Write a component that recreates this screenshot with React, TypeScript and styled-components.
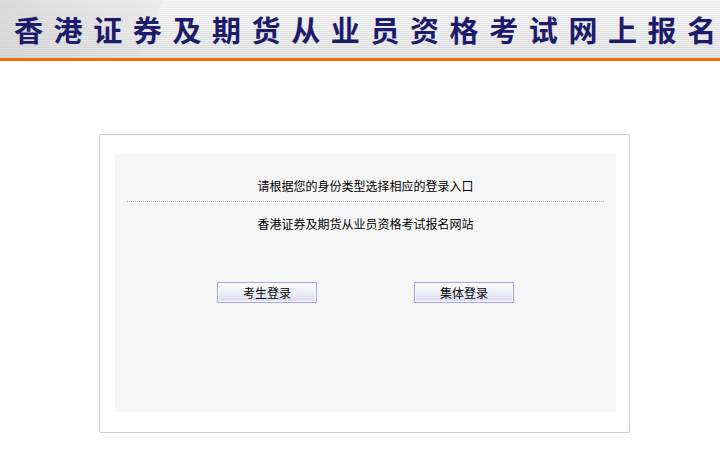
import React from "react"
import styled, { createGlobalStyle } from "styled-components"

const GlobalStyle = createGlobalStyle`
  body {
    margin: 0;
    background: #ffffff;
    font-family: "Noto Sans CJK SC", "Liberation Sans", sans-serif;
  }
`

const Header = styled.header`
  height: 58px;
  border-bottom: 3px solid #f06e0a;
  background:
    linear-gradient(113deg, rgba(200, 200, 200, 0.55) 0, rgba(222, 222, 222, 0.35) 150px, rgba(255, 255, 255, 0) 151px),
    linear-gradient(to bottom, rgba(255, 255, 255, 0.6) 0, rgba(255, 255, 255, 0) 100%),
    repeating-linear-gradient(to bottom, #e9e9e9 0 1px, #dadada 1px 2px);
  display: flex;
  align-items: center;
  overflow: hidden;
`

const Title = styled.h1`
  margin: 0 0 0 14px;
  font-size: 29px;
  font-weight: 700;
  letter-spacing: 10.6px;
  white-space: nowrap;
  color: #1d1b6b;
  line-height: 1;

  & span {
    letter-spacing: 0;
  }
`

const Panel = styled.div`
  width: 501px;
  margin: 73px 0 0 99px;
  border: 1px solid #cbcbcb;
  border-radius: 2px;
  padding: 19px 13px 20px 15px;
  box-sizing: content-box;
  background: #ffffff;
`

const Inner = styled.div`
  height: 258px;
  background: #f6f6f6;
  padding: 24px 12px 0 12px;
  box-sizing: border-box;
  display: flex;
  flex-direction: column;
  align-items: center;
`

const Line = styled.p<{ $rule?: boolean }>`
  margin: 0;
  width: 100%;
  text-align: center;
  font-size: 12px;
  line-height: 16px;
  color: #000;
  padding-bottom: ${(p) => (p.$rule ? "7px" : "0")};
  border-bottom: ${(p) => (p.$rule ? "1px dotted #b0b0b0" : "none")};
  margin-bottom: ${(p) => (p.$rule ? "14px" : "0")};
`

const Buttons = styled.div`
  margin-top: 50px;
  display: flex;
  gap: 97px;
  justify-content: center;
  width: 100%;
`

const LoginButton = styled.button`
  width: 100px;
  height: 21px;
  padding: 0;
  border: 1px solid #a3a3f2;
  box-shadow: inset 0 0 0 1px #ffffff;
  background: linear-gradient(to bottom, #ffffff 0, #eef0f9 45%, #d9dcef 100%);
  font-family: "Noto Sans CJK SC", "Liberation Sans", sans-serif;
  font-size: 12px;
  line-height: 19px;
  color: #000;
  cursor: pointer;
`

export default function App() {
  return (
    <>
      <GlobalStyle />
      <Header>
        <Title>
          香港证券及期货从业员资格考试网上报<span>名</span>
        </Title>
      </Header>
      <Panel>
        <Inner>
          <Line $rule>请根据您的身份类型选择相应的登录入口</Line>
          <Line>香港证券及期货从业员资格考试报名网站</Line>
          <Buttons>
            <LoginButton>考生登录</LoginButton>
            <LoginButton>集体登录</LoginButton>
          </Buttons>
        </Inner>
      </Panel>
    </>
  )
}
